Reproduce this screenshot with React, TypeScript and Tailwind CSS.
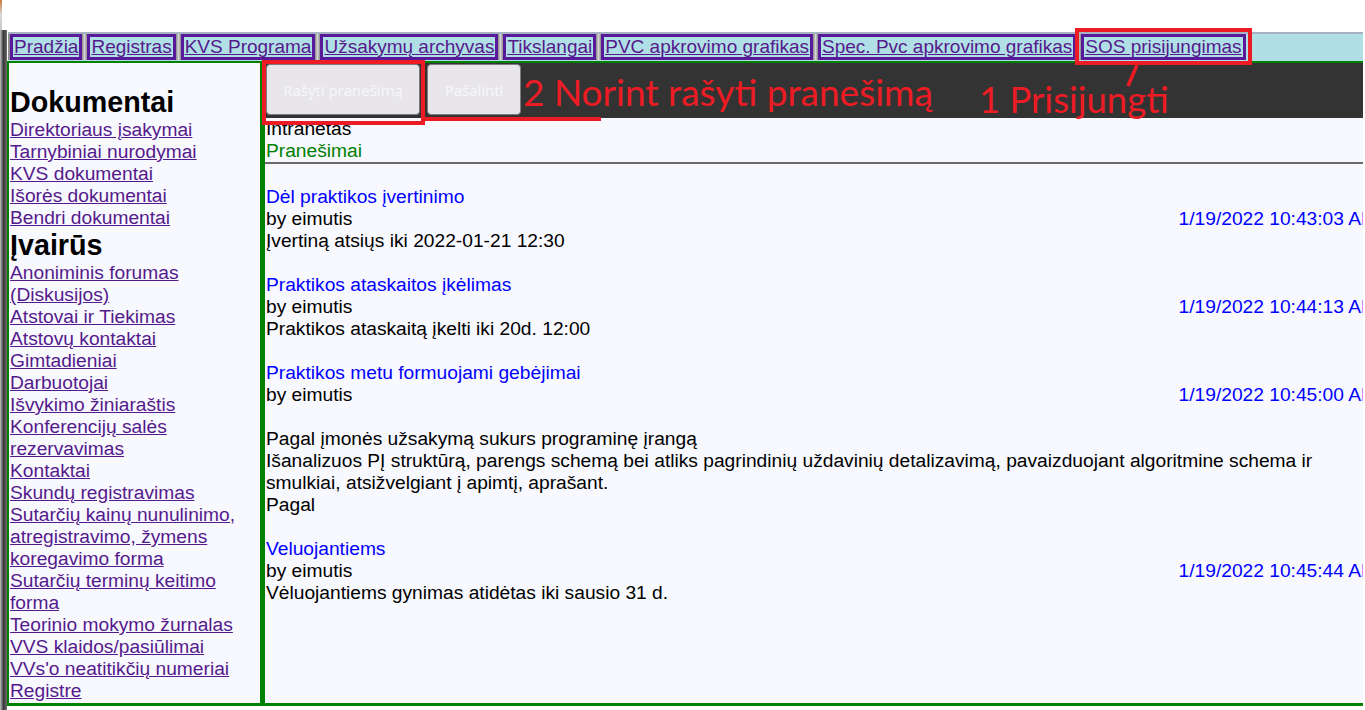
import { Fragment } from 'react';

const navLinks = [
  'Pradžia',
  'Registras',
  'KVS Programa',
  'Užsakymų archyvas',
  'Tikslangai',
  'PVC apkrovimo grafikas',
  'Spec. Pvc apkrovimo grafikas',
  'SOS prisijungimas',
];

type SideItem = { heading?: string; link?: string };

const sideItems: SideItem[] = [
  { heading: 'Dokumentai' },
  { link: 'Direktoriaus įsakymai' },
  { link: 'Tarnybiniai nurodymai' },
  { link: 'KVS dokumentai' },
  { link: 'Išorės dokumentai' },
  { link: 'Bendri dokumentai' },
  { heading: 'Įvairūs' },
  { link: 'Anoniminis forumas (Diskusijos)' },
  { link: 'Atstovai ir Tiekimas' },
  { link: 'Atstovų kontaktai' },
  { link: 'Gimtadieniai' },
  { link: 'Darbuotojai' },
  { link: 'Išvykimo žiniaraštis' },
  { link: 'Konferencijų salės rezervavimas' },
  { link: 'Kontaktai' },
  { link: 'Skundų registravimas' },
  { link: 'Sutarčių kainų nunulinimo, atregistravimo, žymens koregavimo forma' },
  { link: 'Sutarčių terminų keitimo forma' },
  { link: 'Teorinio mokymo žurnalas' },
  { link: 'VVS klaidos/pasiūlimai' },
  { link: "VVs'o neatitikčių numeriai Registre" },
];

type Post = { title: string; author: string; date: string; body: string[]; blankFirst?: boolean };

const posts: Post[] = [
  {
    title: 'Dėl praktikos įvertinimo',
    author: 'eimutis',
    date: '1/19/2022 10:43:03 AM',
    body: ['Įvertiną atsiųs iki 2022-01-21 12:30'],
  },
  {
    title: 'Praktikos ataskaitos įkėlimas',
    author: 'eimutis',
    date: '1/19/2022 10:44:13 AM',
    body: ['Praktikos ataskaitą įkelti iki 20d. 12:00'],
  },
  {
    title: 'Praktikos metu formuojami gebėjimai',
    author: 'eimutis',
    date: '1/19/2022 10:45:00 AM',
    blankFirst: true,
    body: [
      'Pagal įmonės užsakymą sukurs programinę įrangą',
      'Išanalizuos PĮ struktūrą, parengs schemą bei atliks pagrindinių uždavinių detalizavimą, pavaizduojant algoritmine schema ir smulkiai, atsižvelgiant į apimtį, aprašant.',
      'Pagal',
    ],
  },
  {
    title: 'Veluojantiems',
    author: 'eimutis',
    date: '1/19/2022 10:45:44 AM',
    body: ['Vėluojantiems gynimas atidėtas iki sausio 31 d.'],
  },
];

export default function App() {
  return (
    <div className="relative h-[710px] w-[1365px] overflow-hidden bg-white font-['Liberation_Sans',Arial,sans-serif] text-[19.2px] leading-[22px] text-black">
      <div className="flex h-full">
        {/* window frame strip */}
        <div className="flex w-[7px] flex-col">
          <div className="flex h-[30px]">
            <div className="w-[2px] bg-gradient-to-b from-[#c77a3a] via-[#d8d8d8] to-[#c9c9c9]" />
          </div>
          <div className="flex-1 bg-gradient-to-r from-[#c4c4c4] via-[#3a3a3a] to-[#6e6e6e]" />
        </div>

        <div className="flex flex-1 flex-col pt-[32px]">
          {/* Top nav */}
          <nav className="ml-px mr-[2px] flex h-[29px] border-t-2 border-[#a7b3c1] bg-[#b0e0e6] text-[19px]">
            <div className="h-[26px] w-[2px] bg-[#8e8e8e]" />
            {navLinks.map((l, i) => (
              <Fragment key={l}>
                {i > 0 && (
                  <div className="h-[26px] w-[5px] bg-gradient-to-r from-[#8a8a8a] via-[#d4d4d4] to-[#8a8a8a]" />
                )}
                <a
                  href="#"
                  className="h-[26px] whitespace-nowrap border-[3px] border-[#58199a] px-px leading-[20px] text-[#551a8b] underline"
                >
                  {l}
                </a>
              </Fragment>
            ))}
          </nav>

          {/* Main framed area */}
          <div className="mb-[4px] mr-[2px] flex flex-1 border-b-[3px] border-l-2 border-t-2 border-[#008000]">
            {/* Sidebar */}
            <aside className="w-[251px] shrink-0 bg-[#f8f8ff] pl-px pt-[23px]">
              {sideItems.map((s, i) =>
                s.heading ? (
                  <h3 key={i} className="text-[28.7px] font-bold leading-[33px]">
                    {s.heading}
                  </h3>
                ) : (
                  <a key={i} href="#" className="block text-[#551a8b] underline">
                    {s.link}
                  </a>
                ),
              )}
            </aside>

            <div className="w-[5px] shrink-0 bg-[#008000]" />

            {/* Content */}
            <main className="flex-1 overflow-hidden bg-[#f8f8ff]">
              <div className="flex h-[55px] gap-[7px] bg-[#333333] pl-px pt-px">
                <button
                  type="button"
                  className="h-[51px] w-[154px] rounded-[4px] border border-[#7d7d7d] bg-[#e8e6eb] font-['Open_Sans',sans-serif] text-[15px] text-[#f8f8f8]"
                >
                  Rašyti pranešimą
                </button>
                <button
                  type="button"
                  className="h-[51px] w-[94px] rounded-[4px] border border-[#7d7d7d] bg-[#e8e6eb] font-['Open_Sans',sans-serif] text-[15px] text-[#f8f8f8]"
                >
                  Pašalinti
                </button>
              </div>

              <div className="pl-px">
                <p>Intranetas</p>
                <p className="text-[#008000]">Pranešimai</p>
              </div>
              <div className="h-[2px] bg-[#6a6a6a]" />

              <div className="pl-px pt-[22px]">
                {posts.map((p) => (
                  <div key={p.title} className="mb-[22px]">
                    <a href="#" className="block text-[#0000ff]">
                      {p.title}
                    </a>
                    <div className="mr-[-14px] flex justify-between">
                      <span>by {p.author}</span>
                      <span className="whitespace-nowrap text-[#0000ff]">{p.date}</span>
                    </div>
                    {p.blankFirst && <div className="h-[22px]" />}
                    {p.body.map((b, i) => (
                      <p key={i}>{b}</p>
                    ))}
                  </div>
                ))}
              </div>
            </main>
          </div>
        </div>
      </div>

      {/* Red annotations drawn over the page */}
      <div className="absolute left-[262px] top-[60px] h-[65px] w-[163px] border-4 border-[#ed1c24]" />
      <div className="absolute left-[424px] top-[117px] h-[4px] w-[177px] bg-[#ed1c24]" />
      <div className="absolute left-[1075px] top-[28px] h-[37px] w-[177px] border-[4px] border-[#ed1c24]" />
      <svg className="absolute left-[1120px] top-[60px]" width="24" height="30" viewBox="0 0 24 30">
        <line x1="17" y1="5" x2="8" y2="26" stroke="#ed1c24" strokeWidth="3.5" />
      </svg>
      <div className="absolute left-[523px] top-[69px] whitespace-nowrap font-['Lato',sans-serif] text-[37px] leading-[46px] text-[#ed1c24]">
        2 Norint rašyti pranešimą
      </div>
      <div className="absolute left-[979px] top-[76px] whitespace-nowrap font-['Lato',sans-serif] text-[36.5px] leading-[46px] text-[#ed1c24]">
        1 Prisijungti
      </div>
    </div>
  );
}
